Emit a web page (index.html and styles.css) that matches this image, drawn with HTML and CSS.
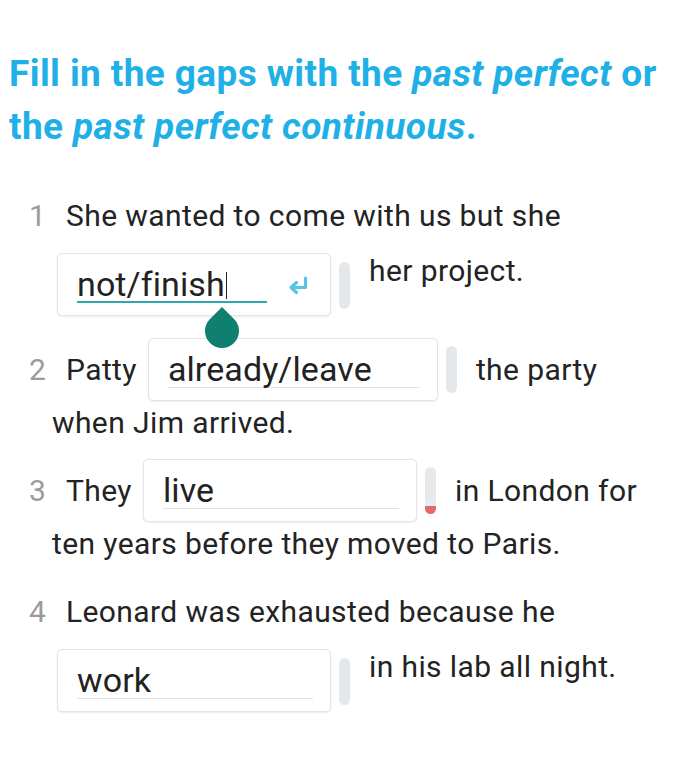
FILE: index.html
```html
<!DOCTYPE html>
<html lang="en">
<head>
<meta charset="utf-8">
<title>Past perfect exercise</title>
<link rel="stylesheet" href="styles.css">
</head>
<body>
<main class="page">
  <h1 class="title">Fill in the gaps with the <em>past perfect</em> or<br>the <em>past perfect continuous</em>.</h1>

  <ol class="items">
    <li class="item">
      <div class="line first"><span class="num">1</span><span>She wanted to come with us but she</span></div>
      <div class="line start">
        <div class="box active">
          <span class="field">not/finish<span class="caret"></span><span class="drop"></span></span>
          <svg class="enter" viewBox="0 0 22 20" width="22" height="20" aria-hidden="true">
            <path d="M18.5 2 V11.5 H4.5" fill="none" stroke="#58c3ea" stroke-width="3.2" stroke-linecap="round" stroke-linejoin="round"/>
            <path d="M9.5 6.5 L4 11.5 L9.5 16.5" fill="none" stroke="#58c3ea" stroke-width="3.2" stroke-linecap="round" stroke-linejoin="round"/>
          </svg>
        </div>
        <span class="bar"></span>
        <span class="after">her project.</span>
      </div>
    </li>

    <li class="item">
      <div class="line first mid"><span class="num">2</span><span class="before">Patty</span>
        <div class="box wide"><span class="field">already/leave</span></div>
        <span class="bar"></span>
        <span class="after">the party</span>
      </div>
      <div class="line text">when Jim arrived.</div>
    </li>

    <li class="item">
      <div class="line first mid"><span class="num">3</span><span class="before">They</span>
        <div class="box"><span class="field">live</span></div>
        <span class="bar error"></span>
        <span class="after">in London for</span>
      </div>
      <div class="line text">ten years before they moved to Paris.</div>
    </li>

    <li class="item">
      <div class="line first"><span class="num">4</span><span>Leonard was exhausted because he</span></div>
      <div class="line start">
        <div class="box"><span class="field">work</span></div>
        <span class="bar"></span>
        <span class="after">in his lab all night.</span>
      </div>
    </li>
  </ol>
</main>
</body>
</html>
```

FILE: styles.css
```css
* { box-sizing: border-box; }

html, body {
  margin: 0;
  padding: 0;
  background: #ffffff;
}

body {
  font-family: Roboto, "Noto Sans", "Liberation Sans", sans-serif;
  color: #232323;
}

.page {
  padding: 47px 0 0 9px;
}

.title {
  margin: 0;
  font-size: 37px;
  line-height: 53px;
  font-weight: 700;
  color: #1eb0e6;
  letter-spacing: 0.4px;
  white-space: nowrap;
}

.title em {
  font-style: italic;
}

.items {
  list-style: none;
  margin: 43px 0 0 0;
  padding: 0 0 0 43px;
}

.item {
  margin-bottom: 22px;
}

.item:nth-child(2) {
  margin-bottom: 16px;
}

.item:nth-child(3) {
  margin-bottom: 28px;
}

.line {
  display: flex;
  font-size: 30px;
  line-height: 40px;
  letter-spacing: 0.4px;
}

.line.first {
  margin-left: -23px;
}

.line.mid {
  align-items: center;
}

.line.start {
  align-items: flex-start;
  margin-top: 17px;
}

.line.text {
  margin-top: 2px;
}

.num {
  display: inline-block;
  width: 37px;
  color: #9b9b9b;
  letter-spacing: 0;
}

.before {
  margin-right: 11px;
}

.line.start .box {
  margin-left: 5px;
}

.box {
  position: relative;
  display: flex;
  align-items: flex-start;
  width: 274px;
  height: 63px;
  background: #fff;
  border: 1px solid #e4e4e4;
  border-radius: 5px;
  box-shadow: 0 1px 2px rgba(0, 0, 0, 0.08);
  flex-shrink: 0;
}

.box.wide {
  width: 290px;
}

.field {
  position: relative;
  flex: 1;
  margin: 12px 17px 0 19px;
  height: 37px;
  font-size: 34px;
  line-height: 37px;
  letter-spacing: 0.1px;
  color: #222;
  border-bottom: 1px solid #e2e2e2;
  white-space: nowrap;
}

.box.active .field {
  margin-right: 0;
  border-bottom: 2px solid #2fa8b0;
  height: 37px;
}

.caret {
  display: inline-block;
  width: 1.5px;
  height: 27px;
  background: #222;
  vertical-align: -3px;
  margin-left: 1px;
}

.drop {
  position: absolute;
  left: 128px;
  top: 48px;
  width: 34px;
  height: 34px;
  background: #0f7f6f;
  border-radius: 0 50% 50% 50%;
  transform: rotate(45deg);
  z-index: 5;
}

.enter {
  flex-shrink: 0;
  margin: 22px 21px 0 20px;
}

.bar {
  flex-shrink: 0;
  width: 11px;
  height: 47px;
  margin-left: 8px;
  border-radius: 6px;
  background: #e5e8ea;
  align-self: center;
}

.line.start .bar {
  align-self: flex-start;
  margin-top: 9px;
}

.bar.error {
  background: linear-gradient(to bottom, #e6e9eb 0, #e6e9eb 70%, #e4eef2 70%, #e4eef2 82%, #e46a6a 82%, #e46a6a 100%);
}

.after {
  margin-left: 19px;
  white-space: nowrap;
}

.line.start .after {
  margin-top: -2px;
}
```
